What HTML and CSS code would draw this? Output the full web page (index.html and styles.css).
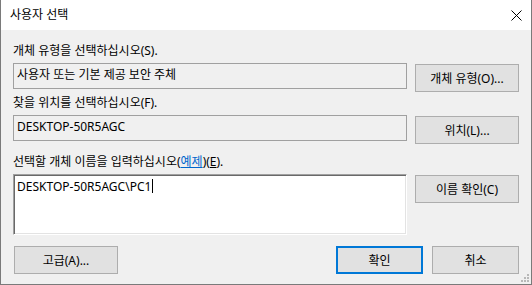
FILE: index.html
```html
<!DOCTYPE html>
<html lang="ko">
  <head>
    <meta charset="UTF-8" />
    <meta name="viewport" content="width=device-width, initial-scale=1.0" />
    <title>사용자 선택</title>
    <link rel="stylesheet" href="styles.css">
  </head>
  <body>
    <div class="dialog">
      <div class="titlebar">
        <span class="title">사용자 선택</span>
        <svg class="close" width="11" height="11" viewBox="0 0 11 11">
          <path d="M0.5 0.5 L10.5 10.5 M10.5 0.5 L0.5 10.5" stroke="#000" stroke-width="1" fill="none" />
        </svg>
      </div>
      <div class="content">
        <div class="label">개체 유형을 선택하십시오(S).</div>
        <div class="row">
          <div class="field">사용자 또는 기본 제공 보안 주체</div>
          <button class="btn">개체 유형(O)...</button>
        </div>

        <div class="label label-2">찾을 위치를 선택하십시오(F).</div>
        <div class="row">
          <div class="field">DESKTOP-50R5AGC</div>
          <button class="btn">위치(L)...</button>
        </div>

        <div class="label label-3">선택할 개체 이름을 입력하십시오(<span class="link">예제</span>)(<u>E</u>).</div>
        <div class="row">
          <div class="names">DESKTOP-50R5AGC\PC1<span class="caret"></span></div>
          <button class="btn">이름 확인(C)</button>
        </div>

        <div class="footer">
          <button class="btn btn-adv">고급(A)...</button>
          <div class="spacer"></div>
          <button class="btn btn-small btn-default">확인</button>
          <button class="btn btn-small">취소</button>
        </div>
      </div>
      <svg class="grip" width="10" height="10" viewBox="0 0 10 10">
        <rect x="7" y="1" width="2" height="2" fill="#b8b8b8" />
        <rect x="4" y="4" width="2" height="2" fill="#b8b8b8" />
        <rect x="7" y="4" width="2" height="2" fill="#b8b8b8" />
        <rect x="1" y="7" width="2" height="2" fill="#b8b8b8" />
        <rect x="4" y="7" width="2" height="2" fill="#b8b8b8" />
        <rect x="7" y="7" width="2" height="2" fill="#b8b8b8" />
      </svg>
    </div>
  </body>
</html>
```

FILE: styles.css
```css
* {
  padding: 0;
  margin: 0;
  box-sizing: border-box;
}
body {
  font-family: "Noto Sans", "Noto Sans CJK KR", sans-serif;
  font-size: 12px;
  color: #000;
  background-color: #fff;
}
.dialog {
  position: relative;
  width: 532px;
  height: 285px;
  background-color: #f0f0f0;
  border: 1px solid #7a7a7a;
  border-top: none;
}
.titlebar {
  height: 30px;
  background-color: #fff;
  display: flex;
  align-items: center;
  justify-content: space-between;
  padding: 0 9px;
}
.title {
  line-height: 30px;
}
.content {
  padding: 13px 12px 0 12px;
}
.label {
  height: 16px;
  line-height: 16px;
  margin-bottom: 4px;
  white-space: nowrap;
}
.label-2 {
  margin-top: 3px;
}
.label-3 {
  margin-top: 10px;
}
.link {
  color: #0066cc;
  text-decoration: underline;
}
.row {
  display: flex;
  gap: 8px;
  align-items: flex-start;
}
.field {
  width: 394px;
  height: 26px;
  border: 1px solid #a0a0a0;
  padding: 3px 3px 0 3px;
  line-height: 16px;
  white-space: nowrap;
}
.names {
  width: 394px;
  height: 61px;
  background-color: #fff;
  border: 1px solid;
  border-color: #a0a0a0 #fff #fff #a0a0a0;
  box-shadow: inset 1px 1px #696969, inset -1px -1px #e3e3e3;
  padding: 4px 3px 0 3px;
  line-height: 16px;
  white-space: nowrap;
}
.caret {
  display: inline-block;
  width: 1px;
  height: 14px;
  background-color: #000;
  vertical-align: -2px;
  margin-left: 1px;
}
.btn {
  width: 104px;
  height: 28px;
  margin-top: 1px;
  background-color: #e1e1e1;
  border: 1px solid #adadad;
  font: inherit;
  color: #000;
}
.footer {
  display: flex;
  gap: 9px;
  margin-top: 11px;
}
.footer .btn {
  margin-top: 0;
}
.btn-adv {
  margin-left: 1px;
}
.spacer {
  flex: 1;
}
.btn-small {
  width: 87px;
}
.btn-default {
  border: 2px solid #0078d7;
}
.grip {
  position: absolute;
  right: 1px;
  bottom: 1px;
}
```
